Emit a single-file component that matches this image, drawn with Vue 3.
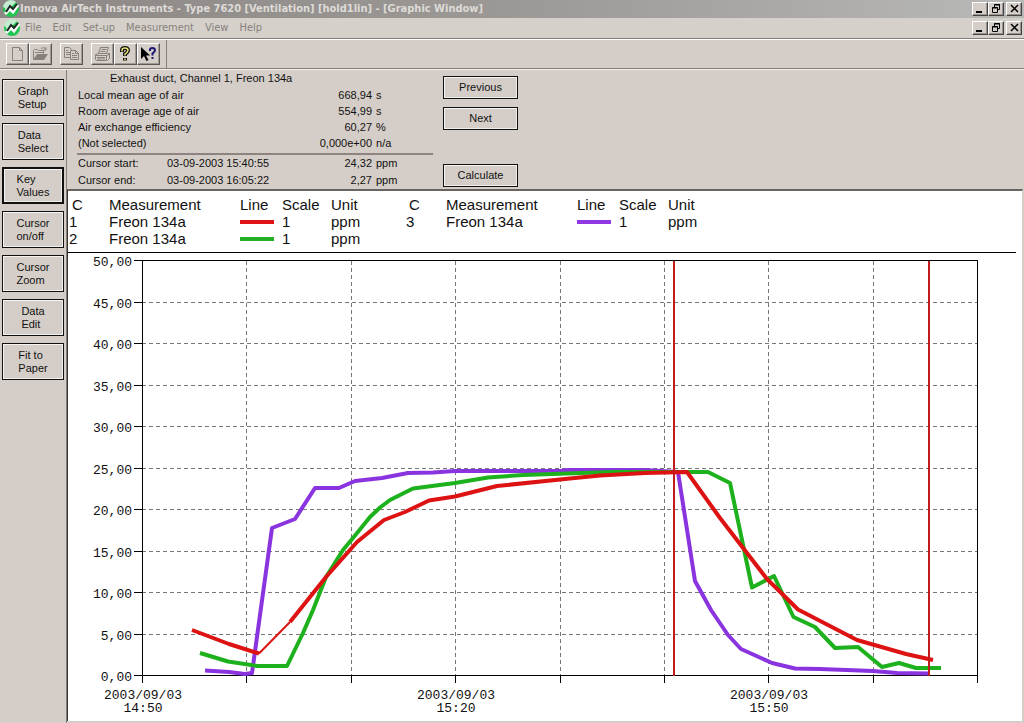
<script setup>
const menus = ['File', 'Edit', 'Set-up', 'Measurement', 'View', 'Help']

const sideButtons = [
  ['Graph', 'Setup'],
  ['Data', 'Select'],
  ['Key', 'Values'],
  ['Cursor', 'on/off'],
  ['Cursor', 'Zoom'],
  ['Data', 'Edit'],
  ['Fit to', 'Paper'],
]

const keyValues = [
  { label: 'Local mean age of air', value: '668,94', unit: 's' },
  { label: 'Room average age of air', value: '554,99', unit: 's' },
  { label: 'Air exchange efficiency', value: '60,27', unit: '%' },
  { label: '(Not selected)', value: '0,000e+00', unit: 'n/a' },
]

const cursors = [
  { label: 'Cursor start:', time: '03-09-2003 15:40:55', value: '24,32', unit: 'ppm' },
  { label: 'Cursor end:', time: '03-09-2003 16:05:22', value: '2,27', unit: 'ppm' },
]

const legends = [
  [
    { c: 1, name: 'Freon 134a', color: 'red', scale: 1, unit: 'ppm' },
    { c: 2, name: 'Freon 134a', color: 'green', scale: 1, unit: 'ppm' },
  ],
  [{ c: 3, name: 'Freon 134a', color: 'purple', scale: 1, unit: 'ppm' }],
]

const plot = { left: 142, right: 977, top: 261, bottom: 676 }
const yTicks = Array.from({ length: 11 }, (_, i) => ({
  y: Math.round(plot.top + ((plot.bottom - plot.top) * i) / 10),
  label: (50 - i * 5).toFixed(2).replace('.', ','),
}))
const xTicks = Array.from({ length: 9 }, (_, i) =>
  Math.round(plot.left + ((plot.right - plot.left) * i) / 8)
)
const xLabels = [
  { x: 143, date: '2003/09/03', time: '14:50' },
  { x: 456, date: '2003/09/03', time: '15:20' },
  { x: 769, date: '2003/09/03', time: '15:50' },
]

const purple =
  '205,670.5 229,672 245,674 252,673 272,528 295,519 315,488 339,488 355,481 382,478 408,473 433,472.5 455,471 560,471 568,470 645,470 678,472 695,581 711,610 728,635 741,649 772,663 795,668.5 820,669 873,671 897,673 928,673.5'
const green =
  '200,653 228,661.5 257,666 287,666 303,633 313,610 326,577 343,550 353,538 370,517 380,507.5 390,500 413,488.5 455,483 488,477.5 523,475 567,473.5 613,472 708,472 730,483 752,587.5 774,576 793.5,617 815,627 835,648 858,647 882,667 899,663 916,668 941,668'
const redStart = '192,630 229,644 259,653.5'
const redThin = '259,653.5 290,622'
const red =
  '290,622 326,577 357,542 384,520 405,512 429,500.5 455,496.5 497,486 560,479.5 600,475.5 645,473 687,472 720,518 767,579 798,609.5 857,640 906,654 933,660'
</script>

<template>
  <div class="window">
    <header class="title-bar">
      <svg class="logo" viewBox="0 0 18 18" aria-hidden="true">
        <circle cx="9" cy="9" r="8" class="logo-disc" />
        <path d="M1 7a8 8 0 0 1 13-5L4 12 3 8z" class="logo-shine" />
        <path d="m3 14 5-5 3 3 5-7" class="logo-light" />
        <path d="m4 12 4-6 3 3 4-5" class="logo-zig" />
      </svg>
      <h1>Innova AirTech Instruments - Type 7620 [Ventilation] [hold1lin] - [Graphic Window]</h1>
      <div class="controls">
        <button type="button" aria-label="Minimize"><svg viewBox="0 0 14 12"><path d="M3 8h6v2H3z" class="ink" /></svg></button>
        <button type="button" aria-label="Restore"><svg viewBox="0 0 14 12"><path d="M5.500 4V1.500h5v5H9M5 2h6M3.500 4.500h5v5h-5zM3 5h6" class="pen" /></svg></button>
        <button type="button" class="close" aria-label="Close"><svg viewBox="0 0 14 12"><path d="m4 2 7 7M11 2l-7 7" class="cross" /></svg></button>
      </div>
    </header>

    <nav class="menu-bar">
      <svg class="logo" viewBox="0 0 18 18" aria-hidden="true">
        <circle cx="9" cy="9" r="8" class="logo-disc" />
        <path d="M1 7a8 8 0 0 1 13-5L4 12 3 8z" class="logo-shine" />
        <path d="m3 14 5-5 3 3 5-7" class="logo-light" />
        <path d="m4 12 4-6 3 3 4-5" class="logo-zig" />
      </svg>
      <div class="menus">
        <button v-for="m in menus" :key="m" type="button">{{ m }}</button>
      </div>
      <div class="controls">
        <button type="button" aria-label="Minimize document"><svg viewBox="0 0 14 12"><path d="M3 8h6v2H3z" class="ink" /></svg></button>
        <button type="button" aria-label="Restore document"><svg viewBox="0 0 14 12"><path d="M5.500 4V1.500h5v5H9M5 2h6M3.500 4.500h5v5h-5zM3 5h6" class="pen" /></svg></button>
        <button type="button" class="close" aria-label="Close document"><svg viewBox="0 0 14 12"><path d="m4 2 7 7M11 2l-7 7" class="cross" /></svg></button>
      </div>
    </nav>

    <div class="toolbar">
      <div class="tools">
        <button type="button" aria-label="New">
          <svg viewBox="0 0 20 18"><path d="M5.500 2.500h7l3 3v10h-10zM12.500 2.500v3h3" class="dim" /></svg>
        </button>
        <button type="button" aria-label="Open">
          <svg viewBox="0 0 20 18">
            <path d="M3.500 14.500v-9l1-1h3l1 1h5v3M11 3.500q3-2.500 5 1m0-2.500v3h-3" class="dim" />
            <path d="m3 15 4-6h11l-4 6z" class="dim-fill" />
            <path d="M5 7h8v1H5z" class="dim-fill" />
          </svg>
        </button>
      </div>
      <div class="tools">
        <button type="button" aria-label="Copy">
          <svg viewBox="0 0 20 18">
            <path d="M3.500 2.500h5l2 2v8h-7zM5 5.500h2M5 7.500h4M5 9.500h4" class="dim" />
            <path d="M9.500 5.500h5l3 3v6h-8zM14.500 5.500v3h3M11 8.500h2M11 10.500h5M11 12.500h5" class="dim panel" />
          </svg>
        </button>
      </div>
      <div class="tools">
        <button type="button" aria-label="Print">
          <svg viewBox="0 0 20 18">
            <path d="M6.500 8.500 8.500 2.500h8l-2 6M9.500 4.500h5M8.500 6.500h5M3.500 9.500l3-1h9l2 0-2 2h-12zM3.500 10.500v4l1 1h10v-5M15.500 15.500l2-2v-5M5 12.500h8M5 14h8" class="dim" />
          </svg>
        </button>
        <button type="button" aria-label="Help">
          <svg viewBox="0 0 20 18">
            <path d="M7 7V5q0-2 3-2t3 2.500q0 1.500-3 3.500v2M10 13v2.500" class="q-edge" />
            <path d="M7 6.500V5q0-2 3-2t3 2.500q0 1.500-3 3.500v1.500M10 13.500v1.500" class="q-core" />
          </svg>
        </button>
        <button type="button" aria-label="Context help">
          <svg viewBox="0 0 20 18">
            <path d="M3 2v12l3-3 2.500 5 2-1L8 10.500h4z" class="ink" />
            <path d="M12 6V4.500Q12 3 14.500 3T17 5.500q0 1-2.500 3v2M14.500 12v2" class="q-blue" />
          </svg>
        </button>
      </div>
    </div>

    <div class="body">
      <aside class="sidebar">
        <button
          v-for="(b, i) in sideButtons"
          :key="i"
          type="button"
          :class="{ active: b[0] === 'Key' }"
        ><span>{{ b[0] }}<br />{{ b[1] }}</span></button>
      </aside>

      <main class="main">
        <section class="info">
          <table class="values">
            <caption>Exhaust duct, Channel 1, Freon 134a</caption>
            <colgroup><col class="c-label" /><col class="c-time" /><col class="c-value" /><col /></colgroup>
            <tbody>
              <tr v-for="k in keyValues" :key="k.label">
                <th scope="row" colspan="2">{{ k.label }}</th>
                <td class="num">{{ k.value }}</td>
                <td class="unit">{{ k.unit }}</td>
              </tr>
            </tbody>
          </table>
          <hr />
          <table class="values cursors">
            <colgroup><col class="c-label" /><col class="c-time" /><col class="c-value" /><col /></colgroup>
            <tbody>
              <tr v-for="c in cursors" :key="c.label">
                <th scope="row">{{ c.label }}</th>
                <td>{{ c.time }}</td>
                <td class="num">{{ c.value }}</td>
                <td class="unit">{{ c.unit }}</td>
              </tr>
            </tbody>
          </table>
          <div class="actions">
            <button type="button">Previous</button>
            <button type="button">Next</button>
            <button type="button" class="calculate">Calculate</button>
          </div>
        </section>

        <section class="graph">
          <div class="legend">
            <table v-for="(rows, i) in legends" :key="i">
              <colgroup><col class="l-c" /><col class="l-name" /><col class="l-line" /><col class="l-scale" /><col /></colgroup>
              <thead>
                <tr><th class="head-c">C</th><th>Measurement</th><th>Line</th><th>Scale</th><th>Unit</th></tr>
              </thead>
              <tbody>
                <tr v-for="r in rows" :key="r.c">
                  <td class="cell-c">{{ r.c }}</td>
                  <td>{{ r.name }}</td>
                  <td><span class="swatch" :class="r.color"></span></td>
                  <td>{{ r.scale }}</td>
                  <td>{{ r.unit }}</td>
                </tr>
              </tbody>
            </table>
          </div>

          <svg class="chart" viewBox="68 253 954 467" role="img" aria-label="Freon 134a concentration over time">
            <g class="grid">
              <line v-for="t in yTicks.slice(1, -1)" :key="t.label" x1="142" x2="977" :y1="t.y - 0.5" :y2="t.y - 0.5" />
              <line v-for="x in xTicks.slice(1, -1)" :key="x" y1="261" y2="676" :x1="x + 0.5" :x2="x + 0.5" />
            </g>
            <g class="axis">
              <rect x="142.500" y="260.500" width="835" height="415" />
              <line v-for="t in yTicks" :key="t.label" x1="134" x2="143" :y1="t.y - 0.5" :y2="t.y - 0.5" />
              <line v-for="x in xTicks" :key="x" y1="676" y2="683" :x1="x + 0.5" :x2="x + 0.5" />
            </g>
            <g class="labels">
              <text v-for="t in yTicks" :key="t.label" x="132" :y="t.y + 5" text-anchor="end">{{ t.label }}</text>
              <g v-for="l in xLabels" :key="l.x">
                <text :x="l.x" y="699" text-anchor="middle">{{ l.date }}</text>
                <text :x="l.x" y="712" text-anchor="middle">{{ l.time }}</text>
              </g>
            </g>
            <polyline class="series s-purple" :points="purple" />
            <polyline class="series s-green" :points="green" />
            <polyline class="series s-red" :points="redStart" />
            <polyline class="series s-red thin" :points="redThin" />
            <polyline class="series s-red" :points="red" />
            <path class="cursor" d="M674 261v415M929 261v415" />
          </svg>
        </section>
      </main>
    </div>
  </div>
</template>

<style>
body {
  margin: 0;
  background: #d5cec8;
}
</style>

<style scoped>
.window {
  min-height: 100vh;
  display: flex;
  flex-direction: column;
  box-sizing: border-box;
  background: #d5cec8;
  font: 11px/13px "Liberation Sans", Arial, sans-serif;
  color: #111;
}
button {
  font: inherit;
  color: inherit;
  margin: 0;
  padding: 0;
  background: #d5cec8;
  border: 0;
}
.title-bar,
.menu-bar {
  display: flex;
  align-items: center;
  padding: 0 2px;
}
.title-bar {
  height: 18px;
  background: linear-gradient(90deg, #8d8885, #9b9896 50%, #b9b9b8);
  color: #dedbd7;
}
.title-bar h1 {
  flex: 1;
  margin: 0;
  font: bold 11px/18px "DejaVu Sans Condensed", "DejaVu Sans", sans-serif;
  white-space: nowrap;
}
.menu-bar {
  height: 20px;
  padding-left: 3px;
  background: #d5d0c9;
  border-bottom: 1px solid #857d78;
}
.menus {
  flex: 1;
  display: flex;
  gap: 11px;
  padding-left: 4px;
}
.menus button {
  background: none;
  color: #87827e;
  font: 11px/16px "DejaVu Sans Condensed", "DejaVu Sans", sans-serif;
}
.logo {
  width: 18px;
  height: 18px;
  flex: none;
}
.logo-disc { fill: #22c452; }
.logo-shine { fill: #c4ecd0; }
.logo-zig { fill: none; stroke: #1c2b24; stroke-width: 2; }
.logo-light { fill: none; stroke: #fff; stroke-width: 3; }
.controls {
  display: flex;
}
.controls button {
  width: 16px;
  height: 14px;
  border: 1px solid;
  border-color: #fff #444 #444 #fff;
  box-shadow: inset -1px -1px #9a9590;
}
.controls .close {
  margin-left: 2px;
}
.controls svg {
  display: block;
  width: 14px;
  height: 12px;
}
.ink { fill: #000; }
.pen { fill: none; stroke: #000; stroke-width: 1; }
.cross { fill: none; stroke: #000; stroke-width: 1.5; }

.toolbar {
  display: flex;
  align-items: flex-start;
  height: 28px;
  border-top: 1px solid #fff;
  border-bottom: 1px solid #857d78;
  padding-left: 6px;
}
.tools {
  display: flex;
  padding: 3px 8px 0 0;
}
.tools:last-child {
  height: 25px;
  padding-right: 6px;
  border-right: 1px solid #857d78;
}
.tools button {
  width: 23px;
  height: 22px;
  border: 1px solid;
  border-color: #fff #5c5754 #5c5754 #fff;
  box-shadow: inset -1px -1px #a09a95;
}
.tools svg {
  display: block;
  width: 20px;
  height: 18px;
}
.dim { fill: none; stroke: #87817d; stroke-width: 1; }
.dim.panel { fill: #d5cec8; }
.dim-fill { fill: #87817d; }
.q-edge { fill: none; stroke: #111; stroke-width: 4; }
.q-core { fill: none; stroke: #e9e47c; stroke-width: 1.5; }
.q-blue { fill: none; stroke: #1c1874; stroke-width: 2; }

.body {
  flex: 1;
  display: flex;
  border-top: 1px solid #f4f1ee;
}
.sidebar {
  width: 66px;
  flex: none;
  box-sizing: border-box;
  display: flex;
  flex-direction: column;
  gap: 7px;
  padding: 9px 2px 0;
}
.sidebar button,
.actions button {
  border: 1px solid #111;
  box-shadow: inset 1px 1px #f6f3f0, inset -1px -1px #f1ede9;
}
.sidebar button {
  height: 37px;
}
.sidebar button span {
  display: inline-block;
  text-align: left;
}
.sidebar button.active {
  border-width: 2px;
}
.main {
  flex: 1;
  min-width: 0;
  display: flex;
  flex-direction: column;
  padding-bottom: 2px;
  border-left: 1px solid #857d78;
}
.info {
  display: grid;
  grid-template-columns: 356px 75px;
  grid-template-rows: 83px 2px 34px;
  column-gap: 10px;
  align-items: start;
  align-content: start;
  padding-left: 10px;
}
.values {
  width: 356px;
  table-layout: fixed;
  border-collapse: collapse;
}
.values caption {
  text-align: left;
  padding-left: 33px;
  height: 17px;
  line-height: 17px;
}
.values th,
.values td {
  height: 16px;
  padding: 0;
  text-align: left;
  font-weight: normal;
  line-height: 16px;
  white-space: nowrap;
}
.values th { padding-left: 1px; }
.cursors th,
.cursors td { height: 17px; line-height: 17px; }
.values .num { text-align: right; }
.values .unit { padding-left: 4px; }
.c-label { width: 90px; }
.c-time { width: 135px; }
.c-value { width: 70px; }
.info hr {
  grid-row: 2;
  width: 100%;
  height: 2px;
  margin: 0;
  border: 0;
  background: #8b8480;
}
.cursors { grid-row: 3; }
.actions {
  grid-column: 2;
  grid-row: 1 / 4;
  display: flex;
  flex-direction: column;
  gap: 8px;
  padding-top: 6px;
}
.actions button { height: 23px; }
.actions .calculate { margin-top: 26px; }

.graph {
  flex: 1;
  margin-right: 1px;
  background: #fff;
  border-top: 2px solid #6a6460;
  border-left: 1px solid #333;
  border-right: 1px solid #d5cec8;
}
.legend {
  display: flex;
  margin-right: 6px;
  padding: 5px 0;
  border-bottom: 1px solid #000;
  font-size: 15px;
}
.legend table {
  width: 337px;
  table-layout: fixed;
  border-collapse: collapse;
  align-self: flex-start;
}
.legend th,
.legend td {
  height: 17px;
  padding: 0;
  line-height: 17px;
  font-weight: normal;
  text-align: left;
}
.legend .head-c { padding-left: 4px; }
.legend .cell-c { padding-left: 1px; }
.l-c { width: 41px; }
.l-name { width: 131px; }
.l-line { width: 42px; }
.l-scale { width: 49px; }
.swatch {
  display: block;
  width: 34px;
  height: 4px;
}
.swatch.red { background: #e01414; }
.swatch.green { background: #24b024; }
.swatch.purple { background: #8f38e4; }

.chart {
  display: block;
  width: 100%;
  height: auto;
}
.grid line {
  stroke: #777;
  stroke-width: 1;
  stroke-dasharray: 4 3;
}
.axis rect,
.axis line {
  fill: none;
  stroke: #000;
  stroke-width: 1;
}
.labels text {
  font: 13px "Liberation Mono", monospace;
  fill: #111;
}
.series {
  fill: none;
  stroke-width: 4;
  stroke-linejoin: round;
}
.s-purple { stroke: #8a34e0; }
.s-green { stroke: #1db11d; }
.s-red { stroke: #dd1212; }
.series.thin { stroke-width: 2; }
.cursor {
  fill: none;
  stroke: #c01c1c;
  stroke-width: 2;
}
</style>
